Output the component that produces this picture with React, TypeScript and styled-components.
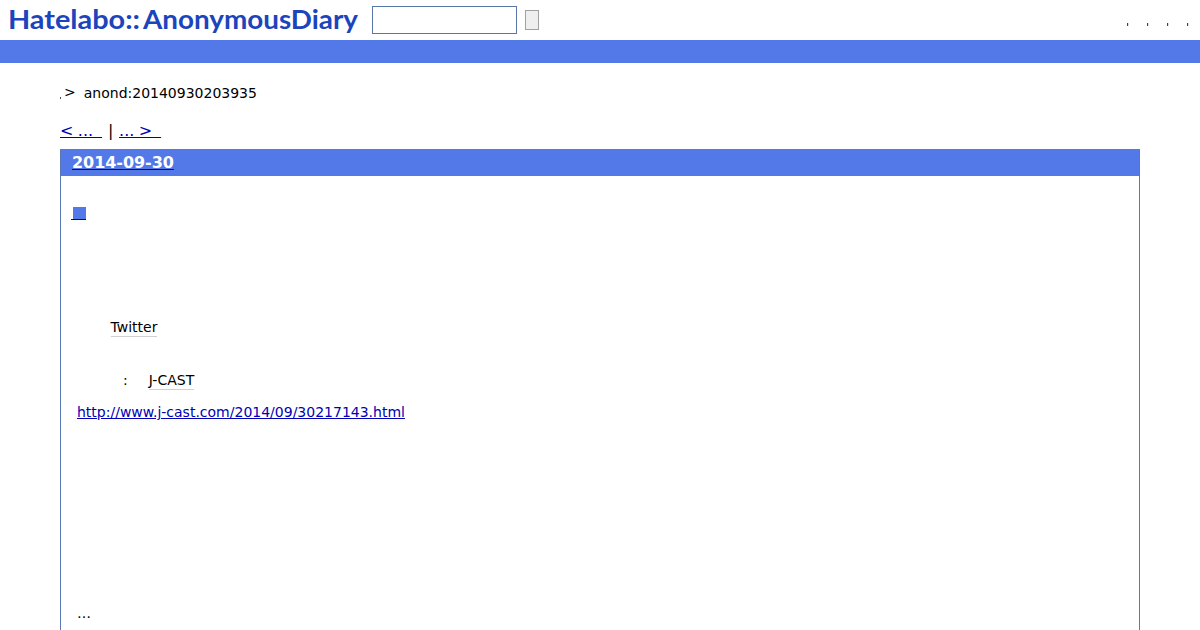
import React from "react";
import styled, { createGlobalStyle } from "styled-components";

const GlobalStyle = createGlobalStyle`
  body {
    margin: 0;
    background: #fff;
    color: #000;
    font: 14px/20px "DejaVu Sans", sans-serif;
  }
`;

const Header = styled.header`
  display: flex;
  align-items: center;
  box-sizing: border-box;
  height: 40px;
  padding: 0 11px 0 8px;
`;

const Logo = styled.svg`
  display: block;
  width: 352px;
  height: 40px;
  fill: #1c44bd;
  font: bold 26px Lato, sans-serif;
`;

const SearchField = styled.input`
  box-sizing: border-box;
  width: 145px;
  height: 28px;
  margin: 0 8px 0 12px;
  padding: 2px;
  border: 1px solid #5877a8;
  border-radius: 0;
  background: #fff;
`;

const SearchButton = styled.button`
  box-sizing: border-box;
  width: 14px;
  height: 20px;
  padding: 0;
  border: 1px solid #a0a0a0;
  border-radius: 0;
  background: #efefef;
`;

const Menu = styled.nav`
  display: flex;
  gap: 18px;
  margin-left: auto;
  padding-top: 9px;
`;

const Dot = styled.span`
  width: 2px;
  height: 3px;
  background: linear-gradient(90deg, #444 50%, #ddd 50%);
`;

const BlueBar = styled.div`
  height: 23px;
  background: #5279e7;
`;

const Main = styled.main`
  padding: 20px 60px 0;
`;

const Breadcrumb = styled.div`
  display: flex;
  align-items: center;
  height: 20px;
`;

const HomeMark = styled.span`
  width: 1px;
  height: 2px;
  margin: 9px 3px 0 0;
  background: #555;
`;

const Arrow = styled.span`
  padding-bottom: 2px;
`;

const PageName = styled.span`
  margin-left: 8px;
`;

const Pager = styled.nav`
  display: flex;
  height: 20px;
  margin-top: 18px;
  font-size: 16px;
`;

const PagerLink = styled.a`
  color: #0000b4;
  text-decoration: underline;
  white-space: pre;
  word-spacing: -0.62px;
`;

const Divider = styled.span`
  margin: 0 6px 0 6px;
  width: 5px;
`;

const Day = styled.section`
  box-sizing: border-box;
  height: 481px;
  margin-top: 8px;
  border: 1px solid #5877b4;
  border-top-color: #5279e7;
  border-bottom: 0;
`;

const DayTitle = styled.h2`
  height: 26px;
  margin: 0;
  padding-left: 11px;
  background: #5279e7;
  font: bold 16px/25px "DejaVu Sans", sans-serif;
`;

const DateLink = styled.a`
  color: #fff;
  letter-spacing: -0.05px;
  text-decoration: underline #0000cc;
`;

const Entry = styled.article`
  padding: 31px 16px 0;
`;

const Permalink = styled.a`
  display: block;
  box-sizing: border-box;
  width: 15px;
  height: 13px;
  margin-left: -6px;
  border-bottom: 1px solid #0000b4;
`;

const PermalinkMark = styled.span`
  display: block;
  width: 13px;
  height: 12px;
  margin-left: 2px;
  background: #5279e7;
`;

const Line = styled.p<{ $gap: number; $indent?: number }>`
  display: flex;
  height: 20px;
  margin: ${({ $gap }) => $gap}px 0 0;
  padding-left: ${({ $indent = 0 }) => $indent}px;
`;

const Keyword = styled.a<{ $start?: number }>`
  height: 19px;
  margin-left: ${({ $start = 0 }) => $start}px;
  border-bottom: 1px solid #d0d0d0;
`;

const ArticleLink = styled.a`
  color: #0000b4;
  text-decoration: underline;
`;

export default function App() {
  return (
    <>
      <GlobalStyle />
      <Header>
        <Logo viewBox="0 0 352 40">
          <text x="0" y="29" textLength="132" lengthAdjust="spacingAndGlyphs">Hatelabo::</text>
          <text x="135" y="29" textLength="215" lengthAdjust="spacingAndGlyphs">AnonymousDiary</text>
        </Logo>
        <SearchField aria-label="search" />
        <SearchButton aria-label="submit" />
        <Menu>
          <Dot />
          <Dot />
          <Dot />
          <Dot />
        </Menu>
      </Header>
      <BlueBar />
      <Main>
        <Breadcrumb>
          <HomeMark />
          <Arrow>&gt;</Arrow>
          <PageName>anond:20140930203935</PageName>
        </Breadcrumb>
        <Pager>
          <PagerLink>{"< ...\u00a0\u00a0"}</PagerLink>
          <Divider>|</Divider>
          <PagerLink>{"... >\u00a0\u00a0"}</PagerLink>
        </Pager>
        <Day>
          <DayTitle>
            <DateLink>2014-09-30</DateLink>
          </DayTitle>
          <Entry>
            <Permalink>
              <PermalinkMark />
            </Permalink>
            <Line $gap={97} $indent={33.5}>
              <Keyword>Twitter</Keyword>
            </Line>
            <Line $gap={33} $indent={46}>
              <span>:</span>
              <Keyword $start={21}>J-CAST</Keyword>
            </Line>
            <Line $gap={12}>
              <ArticleLink>http://www.j-cast.com/2014/09/30217143.html</ArticleLink>
            </Line>
            <Line $gap={181}>…</Line>
          </Entry>
        </Day>
      </Main>
    </>
  );
}
